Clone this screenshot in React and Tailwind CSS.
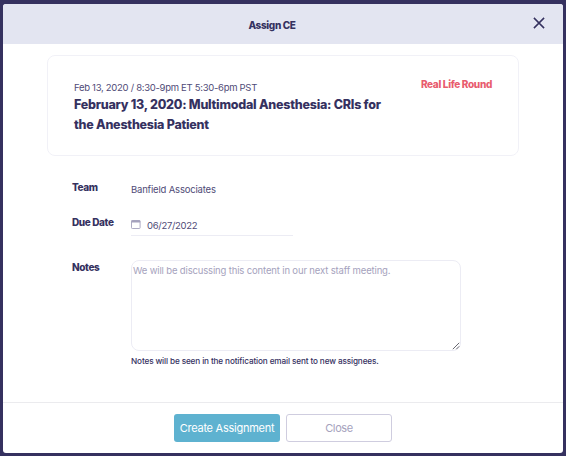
import { useState } from "react"

const CloseIcon = () => (
  <svg width="12" height="12" viewBox="0 0 12 12" fill="none" stroke="currentColor" strokeWidth="1.5">
    <path d="M0.9 0.9 L11.1 11.1 M11.1 0.9 L0.9 11.1" />
  </svg>
)

const CalendarIcon = () => (
  <svg width="10" height="9" viewBox="0 0 10 9" fill="none">
    <rect x="0.5" y="0.5" width="8.6" height="8" rx="0.8" stroke="#a5a2bd" strokeWidth="0.9" />
    <rect x="0.4" y="0.3" width="8.8" height="2.3" rx="0.6" fill="#a5a2bd" />
  </svg>
)

const ResizeGrip = () => (
  <svg width="8" height="8" viewBox="0 0 8 8" stroke="#55555f" strokeWidth="0.9">
    <path d="M0.8 7.2 L7.2 0.8 M4.3 7.2 L7.2 4.3" />
  </svg>
)

function FieldLabel({ children }) {
  return (
    <span className="w-[59px] shrink-0 whitespace-nowrap text-[10px] font-extrabold leading-[14px] tracking-[-0.38px]">
      {children}
    </span>
  )
}

export default function App() {
  const [notes, setNotes] = useState("")

  return (
    <div className="h-[456px] w-[566px] bg-[#35315f] pl-[3px] pr-[3px] pt-[4px] font-['Inter','Liberation_Sans',sans-serif] text-[#35315f]">
      <div className="flex h-[449px] flex-col overflow-hidden rounded-[3px] bg-white">
        {/* Header */}
        <header className="relative flex h-10 shrink-0 items-center justify-center bg-[#e3e5f1] pt-px">
          <h1 className="-ml-[22px] text-[10px] font-extrabold leading-[14px] tracking-[-0.35px]">Assign CE</h1>
          <button className="absolute right-[18px] top-[13px]" aria-label="Close dialog">
            <CloseIcon />
          </button>
        </header>

        <main className="flex-1 pl-11 pr-11 pt-[11px]">
          {/* Course card */}
          <section className="flex h-[101px] justify-between rounded-lg border border-[#f1f1f7] pl-[26px] pr-[26px] pt-[23px]">
            <div>
              <p className="whitespace-nowrap pt-[2px] text-[9.5px] leading-[14px] tracking-[-0.29px] text-[#4f4b77]">
                Feb 13, 2020 / 8:30-9pm ET 5:30-6pm PST
              </p>
              <h2 className="whitespace-nowrap text-[12.5px] font-extrabold leading-[20px] tracking-[-0.24px]">
                February 13, 2020: Multimodal Anesthesia: CRIs for
                <br />
                the Anesthesia Patient
              </h2>
            </div>
            <span className="whitespace-nowrap text-[10px] font-extrabold leading-[11px] tracking-[-0.32px] text-[#e85c6e]">
              Real Life Round
            </span>
          </section>

          {/* Form */}
          <div className="pl-[25px]">
            <div className="flex h-10 pt-[24px]">
              <FieldLabel>Team</FieldLabel>
              <span className="pt-[3px] text-[9.5px] leading-[14px] tracking-[-0.18px] text-[#4f4b77]">
                Banfield Associates
              </span>
            </div>

            <div className="flex pt-[19px]">
              <FieldLabel>Due Date</FieldLabel>
              <div className="flex h-[21px] w-[162px] items-center border-b border-[#ececf4] pb-px text-[#4f4b77]">
                <CalendarIcon />
                <span className="pl-1.5 pt-[2px] text-[9.5px] leading-[14px] tracking-[-0.3px]">06/27/2022</span>
              </div>
            </div>

            <div className="flex pt-6">
              <FieldLabel>Notes</FieldLabel>
              <div>
                <div className="relative h-[91px] w-[330px]">
                  <textarea
                    value={notes}
                    onChange={(e) => setNotes(e.target.value)}
                    placeholder="We will be discussing this content in our next staff meeting."
                    className="block h-full w-full resize-none rounded-lg border border-[#ececf4] px-px pt-[3px] text-[9.5px] leading-[14px] tracking-[-0.15px] placeholder:text-[#a5a2bd]"
                  />
                  <span className="pointer-events-none absolute bottom-px right-px">
                    <ResizeGrip />
                  </span>
                </div>
                <p className="pt-[4px] text-[8.2px] font-medium leading-[12px] tracking-[-0.13px]">
                  Notes will be seen in the notification email sent to new assignees.
                </p>
              </div>
            </div>
          </div>
        </main>

        {/* Footer */}
        <footer className="flex h-[51px] shrink-0 justify-center gap-1.5 border-t border-[#ebebee] pt-[11px]">
          <button className="h-7 w-[106px] whitespace-nowrap rounded-[3px] bg-[#5eb2d0] text-[11px] tracking-[-0.26px] text-white">
            Create Assignment
          </button>
          <button className="h-7 w-[106px] rounded-[3px] border border-[#cfcddf] text-[11px] tracking-[-0.4px] text-[#a5a2bd]">
            Close
          </button>
        </footer>
      </div>
    </div>
  )
}
